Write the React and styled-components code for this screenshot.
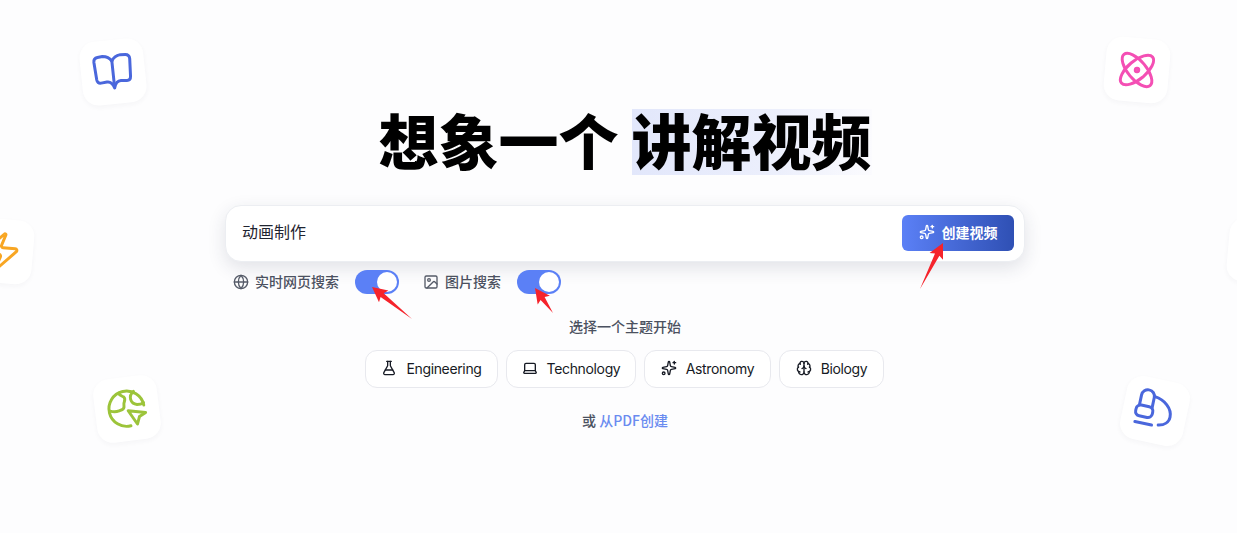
import React, { useState } from 'react';
import styled, { createGlobalStyle } from 'styled-components';
import { Atom, Brain, FlaskConical, Globe, Image, Laptop, Sparkles, Zap } from 'lucide-react';

const GlobalStyle = createGlobalStyle`
  html, body {
    margin: 0;
    padding: 0;
    height: 100%;
    background: #fdfdfe;
    overflow: hidden;
  }
  body {
    font-family: "Inter", "Noto Sans CJK SC", sans-serif;
  }
`;

const Page = styled.div`
  position: relative;
  width: 1237px;
  height: 533px;
  overflow: hidden;
  background: #fdfdfe;
`;

const Main = styled.main`
  display: flex;
  flex-direction: column;
  align-items: center;
  width: 800px;
  margin-left: 225px;
  padding-top: 109px;
`;

const Title = styled.h1`
  margin: 0;
  height: 72px;
  display: flex;
  align-items: flex-start;
  gap: 13px;
  font-family: "Noto Sans CJK SC", sans-serif;
  font-size: 60px;
  font-weight: 900;
  line-height: 60px;
  color: #000;
  white-space: nowrap;
`;

const Highlight = styled.span`
  display: block;
  height: 66px;
  background: linear-gradient(90deg, #e2e7fb 0%, #eceffc 60%, #fbfbfe 100%);
`;

const SearchBox = styled.div`
  box-sizing: border-box;
  width: 800px;
  height: 57px;
  margin-top: 24px;
  display: flex;
  align-items: center;
  justify-content: space-between;
  padding: 0 10px 1px 16px;
  background: #fff;
  border: 1px solid #eceef2;
  border-radius: 16px;
  box-shadow: 0 6px 18px rgba(40, 50, 80, 0.13);
`;

const SearchInput = styled.input`
  flex: 1;
  margin-bottom: 4px;
  padding: 0;
  border: none;
  outline: none;
  background: transparent;
  font-family: "Noto Sans CJK SC", sans-serif;
  font-size: 16px;
  color: #1f2430;
`;

const CreateButton = styled.button`
  width: 112px;
  height: 36px;
  padding: 0 0 3px;
  display: flex;
  align-items: center;
  justify-content: center;
  gap: 7px;
  border: none;
  border-radius: 6px;
  color: #fff;
  background: linear-gradient(90deg, #5b80f6 0%, #2f50b4 100%);
  font-family: "Noto Sans CJK SC", sans-serif;
  font-size: 14px;
  font-weight: 700;
  cursor: pointer;
`;

const OptionsRow = styled.div`
  align-self: flex-start;
  height: 24px;
  margin: 8px 0 0 8px;
  display: flex;
  align-items: center;
  gap: 24px;
`;

const Option = styled.label`
  display: flex;
  align-items: center;
  svg { margin-right: 6px; color: #555b68; }
`;

const OptionText = styled.span`
  margin-bottom: 3px;
  font-family: "Noto Sans CJK SC", sans-serif;
  font-size: 14px;
  font-weight: 500;
  color: #4b5160;
`;

const Track = styled.button`
  box-sizing: border-box;
  width: 44px;
  height: 24px;
  margin-left: 16px;
  padding: 2px;
  display: flex;
  justify-content: ${(p) => (p.$on ? 'flex-end' : 'flex-start')};
  border: none;
  border-radius: 12px;
  background: ${(p) => (p.$on ? '#5b80f6' : '#d5d8e0')};
  cursor: pointer;
`;

const Knob = styled.span`
  width: 20px;
  height: 20px;
  border-radius: 50%;
  background: #fff;
`;

const Hint = styled.p`
  margin: 22px 0 0;
  font-family: "Noto Sans CJK SC", sans-serif;
  font-size: 14px;
  font-weight: 500;
  line-height: 21px;
  color: #4b5160;
`;

const Topics = styled.div`
  margin: 13px 0 0 -1px;
  display: flex;
  gap: 8px;
`;

const Chip = styled.button`
  box-sizing: border-box;
  height: 38px;
  width: ${(p) => p.$w}px;
  padding: 0 0 2px;
  display: flex;
  align-items: center;
  justify-content: center;
  gap: 9px;
  background: #fff;
  border: 1px solid #e8e9ee;
  border-radius: 12px;
  font-family: "Inter", sans-serif;
  font-size: 14px;
  letter-spacing: -0.35px;
  color: #161a24;
  cursor: pointer;
`;

const Alt = styled.p`
  margin: 22px 0 0;
  font-family: "Noto Sans CJK SC", sans-serif;
  font-size: 14px;
  font-weight: 500;
  line-height: 21px;
  color: #4b5160;
  a { color: #6a8bf0; text-decoration: none; }
`;

const FloatCard = styled.div`
  position: absolute;
  left: ${(p) => p.$x}px;
  top: ${(p) => p.$y}px;
  width: 64px;
  height: 64px;
  display: flex;
  align-items: center;
  justify-content: center;
  background: #fff;
  border-radius: 16px;
  box-shadow: 0 2px 5px rgba(40, 50, 80, 0.04);
  transform: rotate(${(p) => p.$r}deg);
  color: ${(p) => p.$c};
`;

const Overlay = styled.svg`
  position: absolute;
  left: 0;
  top: 0;
  pointer-events: none;
`;

// drawings for the icons the packages don't have in this shape
const BookIcon = () => (
  <svg width="42" height="42" viewBox="0 0 42 42" fill="none" stroke="currentColor" strokeWidth="3" strokeLinejoin="round" strokeLinecap="round">
    <path d="M21 10C19 6.500 16 5 12 4.500L7 5C4.500 5.300 3 7 3 9.500L4 27C4.200 29.500 5.500 31 8 30.800L14 30.300C17 30.100 19.500 32 21 37C22.500 32 25 30.100 28 30.300L34 30.800C36.500 31 37.800 29.500 38 27L39 9.500C39 7 37.500 5.300 35 5L30 4.500C26 5 23 6.500 21 10Z" />
    <path d="M21 10V36" />
  </svg>
);

const EarthIcon = () => (
  <svg width="40" height="40" viewBox="0 0 42 42" fill="none" stroke="currentColor" strokeWidth="3.100" strokeLinejoin="round" strokeLinecap="round">
    <path d="M39 19A18.500 18.500 0 1 0 23 39" />
    <path d="M14 3.500c1 2.500 3.500 3.500 5 4.500 1.500 1.500 1 3.500 0 5.500-1 1.500-.5 3.500-1 5.500-.5 2-3.500 2.500-5.500 3-2 .5-6 .5-9.500-1" />
    <path d="M30 3.500c-3 2-4.500 5-4 8 .5 3 3 5.500 6 6 2.500.3 5 0 7-1" />
    <path d="M22 23l18 4-7 3.500-3 7.500z" />
  </svg>
);

const MicroscopeIcon = () => (
  <svg width="42" height="42" viewBox="0 0 42 42" fill="none" stroke="currentColor" strokeWidth="3" strokeLinejoin="round" strokeLinecap="round">
    <path d="M4.500 18V8a6.500 6.500 0 0 1 13 0v10" />
    <rect x="2" y="18" width="17" height="11" rx="4.500" />
    <path d="M18 7c10 1 19 8 19 17 0 5-4 9-10 10" />
    <path d="M3.500 35.500h17" />
  </svg>
);

// red annotation arrow from tail to tip
const arrowPoints = ([tx, ty], [bx, by]) => {
  const dx = bx - tx;
  const dy = by - ty;
  const len = Math.hypot(dx, dy);
  const ux = dx / len;
  const uy = dy / len;
  const pt = (along, side) => `${(tx + ux * along - uy * side).toFixed(1)},${(ty + uy * along + ux * side).toFixed(1)}`;
  return [pt(0, 0), pt(15, 7.5), pt(13, 2.5), pt(len, 0), pt(13, -2.5), pt(15, -7.5)].join(' ');
};

const arrows = [
  [[372, 287], [412, 319]],
  [[535, 288], [553, 313]],
  [[943, 243], [920, 289]],
];

const floatCards = [
  { x: 81, y: 40, r: -6, c: '#4a67dc', icon: <BookIcon /> },
  { x: 1105, y: 38, r: 5, c: '#f44fb4', icon: <Atom size={42} strokeWidth={1.700} /> },
  { x: -31, y: 219, r: 5, c: '#f8a623', icon: <Zap size={42} strokeWidth={1.700} /> },
  { x: 95, y: 377, r: -7, c: '#9cc43a', icon: <EarthIcon /> },
  { x: 1123, y: 379, r: 12, c: '#4a67dc', icon: <MicroscopeIcon /> },
  { x: 1228, y: 219, r: 5, c: '#4a67dc', icon: null },
];

const topics = [
  { label: 'Engineering', width: 133, icon: <FlaskConical size={16} /> },
  { label: 'Technology', width: 130, icon: <Laptop size={16} /> },
  { label: 'Astronomy', width: 127, icon: <Sparkles size={16} /> },
  { label: 'Biology', width: 105, icon: <Brain size={16} /> },
];

const Toggle = () => {
  const [on, setOn] = useState(true);
  return (
    <Track type="button" $on={on} onClick={() => setOn(!on)}>
      <Knob />
    </Track>
  );
};

const App = () => (
  <Page>
    <GlobalStyle />
    {floatCards.map((card) => (
      <FloatCard key={card.x} $x={card.x} $y={card.y} $r={card.r} $c={card.c}>
        {card.icon}
      </FloatCard>
    ))}
    <Main>
      <Title>
        <span>想象一个</span>
        <Highlight>讲解视频</Highlight>
      </Title>
      <SearchBox>
        <SearchInput defaultValue="动画制作" />
        <CreateButton type="button">
          <Sparkles size={16} />
          创建视频
        </CreateButton>
      </SearchBox>
      <OptionsRow>
        <Option>
          <Globe size={16} />
          <OptionText>实时网页搜索</OptionText>
          <Toggle />
        </Option>
        <Option>
          <Image size={16} />
          <OptionText>图片搜索</OptionText>
          <Toggle />
        </Option>
      </OptionsRow>
      <Hint>选择一个主题开始</Hint>
      <Topics>
        {topics.map((topic) => (
          <Chip type="button" key={topic.label} $w={topic.width}>
            {topic.icon}
            {topic.label}
          </Chip>
        ))}
      </Topics>
      <Alt>
        或 <a href="#pdf">从PDF创建</a>
      </Alt>
    </Main>
    <Overlay width="1237" height="533">
      {arrows.map(([tip, tail]) => (
        <polygon key={tip[0]} points={arrowPoints(tip, tail)} fill="#f5232b" />
      ))}
    </Overlay>
  </Page>
);

export default App;
